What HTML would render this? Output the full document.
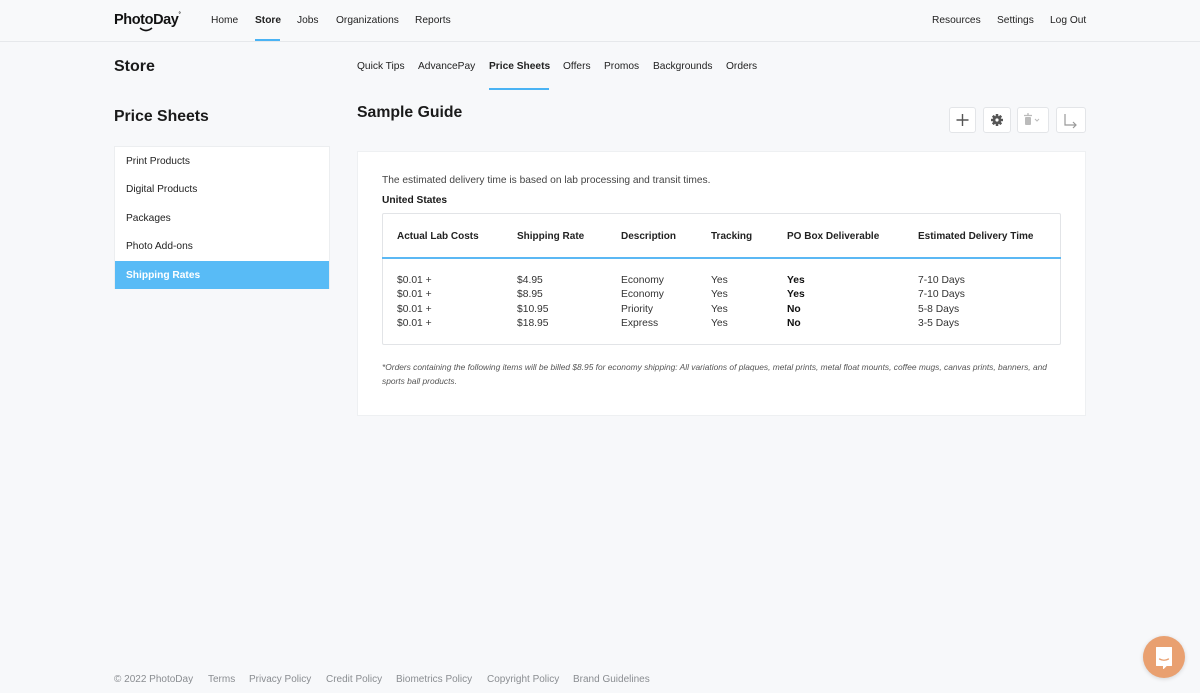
<!DOCTYPE html>
<html><head><meta charset="utf-8"><style>
*{margin:0;padding:0;box-sizing:border-box}
body{width:1200px;height:693px;background:#f7f8fa;font-family:"Liberation Sans",Arial,sans-serif;color:#1a1a1a;position:relative;overflow:hidden;font-size:11px}
.a{position:absolute;white-space:nowrap}
.hdr{position:absolute;left:0;top:0;width:1200px;height:42px;border-bottom:1px solid #e6e8eb;background:#f8f9fa}
.nav{font-size:10.2px;color:#222}
.ul{position:absolute;height:2px;background:#4ab3f4}
.btn{position:absolute;top:107px;height:26px;background:#fff;border:1px solid #e3e5e8;border-radius:3px}
.side{position:absolute;left:114px;top:146px;width:216px;height:143px;background:#fff;border:1px solid #eceef0}
.side div{height:28.4px;line-height:28.4px;padding-left:11px;padding-top:1px;font-size:10.2px;color:#222}
.card{position:absolute;left:357px;top:151px;width:729px;height:265px;background:#fff;border:1px solid #eef0f2}
.tbl{position:absolute;left:382px;top:213px;width:679px;height:132px;border:1px solid #e2e4e7;border-radius:2px;background:#fff}
.td{font-size:10.3px;color:#333}
.th{font-size:10px;font-weight:bold;color:#222}
.ft{font-size:10px;color:#8a8d91;top:674px}
</style></head><body>
<div class="hdr"></div>
<div class="a" style="left:114px;top:12px;font-size:14.5px;font-weight:bold;letter-spacing:-0.4px;color:#111">PhotoDay<span style="font-size:6px;vertical-align:top">°</span></div>
<svg class="a" style="left:139px;top:27px" width="14" height="6"><path d="M1 1 Q7 6 13 1" stroke="#111" stroke-width="1.6" fill="none"/></svg>
<div class="a nav" style="left:211px;top:15px">Home</div>
<div class="a nav" style="left:255px;top:15px;font-weight:bold">Store</div>
<div class="ul" style="left:255px;top:39px;width:25px"></div>
<div class="a nav" style="left:297px;top:15px">Jobs</div>
<div class="a nav" style="left:336px;top:15px">Organizations</div>
<div class="a nav" style="left:415px;top:15px">Reports</div>
<div class="a nav" style="left:932px;top:15px">Resources</div>
<div class="a nav" style="left:997px;top:15px">Settings</div>
<div class="a nav" style="left:1050px;top:15px">Log Out</div>

<div class="a" style="left:114px;top:58px;font-size:16px;font-weight:bold">Store</div>
<div class="a nav" style="left:357px;top:61px">Quick Tips</div>
<div class="a nav" style="left:418px;top:61px">AdvancePay</div>
<div class="a nav" style="left:489px;top:61px;font-weight:bold">Price Sheets</div>
<div class="ul" style="left:489px;top:88px;width:60px"></div>
<div class="a nav" style="left:563px;top:61px">Offers</div>
<div class="a nav" style="left:604px;top:61px">Promos</div>
<div class="a nav" style="left:653px;top:61px">Backgrounds</div>
<div class="a nav" style="left:726px;top:61px">Orders</div>

<div class="a" style="left:114px;top:108px;font-size:15.8px;font-weight:bold">Price Sheets</div>
<div class="a" style="left:357px;top:104px;font-size:15.8px;font-weight:bold">Sample Guide</div>

<div class="btn" style="left:949px;width:27px"><svg width="25" height="24"><path d="M12.5 6v12M6.5 12h12" stroke="#555" stroke-width="1.4"/></svg></div>
<div class="btn" style="left:983px;width:28px"><svg width="26" height="24"><g fill="#555" transform="translate(13 12)"><rect x="-1.3" y="-6" width="2.6" height="12" rx="0.5"/><rect x="-1.3" y="-6" width="2.6" height="12" rx="0.5" transform="rotate(45)"/><rect x="-1.3" y="-6" width="2.6" height="12" rx="0.5" transform="rotate(90)"/><rect x="-1.3" y="-6" width="2.6" height="12" rx="0.5" transform="rotate(135)"/><circle r="4.3"/><circle r="1.6" fill="#fff"/></g></svg></div>
<div class="btn" style="left:1017px;width:32px"><svg width="30" height="24"><rect x="7" y="9" width="6" height="8" rx="1" fill="#bbb"/><path d="M6 7.5h8M9 6h2" stroke="#bbb" stroke-width="1.2"/><path d="M17 11l2 2 2-2" stroke="#bbb" fill="none"/></svg></div>
<div class="btn" style="left:1056px;width:30px"><svg width="28" height="24"><path d="M8 6v11h11M16 14l3 3-3 3" stroke="#999" stroke-width="1.2" fill="none"/></svg></div>

<div class="side">
<div>Print Products</div><div>Digital Products</div><div>Packages</div><div>Photo Add-ons</div>
<div style="background:#58bbf6;color:#fff;font-weight:bold;height:28px">Shipping Rates</div>
</div>

<div class="card"></div>
<div class="a" style="left:382px;top:175px;font-size:10.2px;color:#444">The estimated delivery time is based on lab processing and transit times.</div>
<div class="a" style="left:382px;top:195px;font-size:10.2px;font-weight:bold">United States</div>
<div class="tbl"></div>
<div class="a" style="left:382px;top:257px;width:679px;height:2px;background:#5bb8f4"></div>
<div class="a th" style="left:397px;top:231px">Actual Lab Costs</div>
<div class="a th" style="left:517px;top:231px">Shipping Rate</div>
<div class="a th" style="left:621px;top:231px">Description</div>
<div class="a th" style="left:711px;top:231px">Tracking</div>
<div class="a th" style="left:787px;top:231px">PO Box Deliverable</div>
<div class="a th" style="left:918px;top:231px">Estimated Delivery Time</div>

<div class="a td" style="left:397px;top:274px;line-height:14.4px">$0.01 +<br>$0.01 +<br>$0.01 +<br>$0.01 +</div>
<div class="a td" style="left:517px;top:274px;line-height:14.4px">$4.95<br>$8.95<br>$10.95<br>$18.95</div>
<div class="a td" style="left:621px;top:274px;line-height:14.4px">Economy<br>Economy<br>Priority<br>Express</div>
<div class="a td" style="left:711px;top:274px;line-height:14.4px">Yes<br>Yes<br>Yes<br>Yes</div>
<div class="a td" style="left:787px;top:274px;line-height:14.4px;font-weight:bold;color:#111">Yes<br>Yes<br>No<br>No</div>
<div class="a td" style="left:918px;top:274px;line-height:14.4px">7-10 Days<br>7-10 Days<br>5-8 Days<br>3-5 Days</div>

<div class="a" style="left:382px;top:360px;font-size:8.4px;font-style:italic;color:#555;line-height:14px;white-space:normal;width:675px">*Orders containing the following items will be billed $8.95 for economy shipping: All variations of plaques, metal prints, metal float mounts, coffee mugs, canvas prints, banners, and sports ball products.</div>

<div class="a ft" style="left:114px">© 2022 PhotoDay</div>
<div class="a ft" style="left:208px">Terms</div>
<div class="a ft" style="left:249px">Privacy Policy</div>
<div class="a ft" style="left:326px">Credit Policy</div>
<div class="a ft" style="left:396px">Biometrics Policy</div>
<div class="a ft" style="left:487px">Copyright Policy</div>
<div class="a ft" style="left:573px">Brand Guidelines</div>

<div class="a" style="left:1143px;top:636px;width:42px;height:42px;border-radius:50%;background:#e9a070;box-shadow:0 1px 4px rgba(0,0,0,.15)">
<svg width="42" height="42"><path d="M13.5 11.5h15v18h-5l-3 3v-3h-7z" fill="#fff" stroke="#fff" stroke-width="1" stroke-linejoin="round"/><path d="M16.5 23q4.5 2.5 9 0" stroke="#e9a070" stroke-width="1.3" fill="none" stroke-linecap="round"/></svg>
</div>
</body></html>
